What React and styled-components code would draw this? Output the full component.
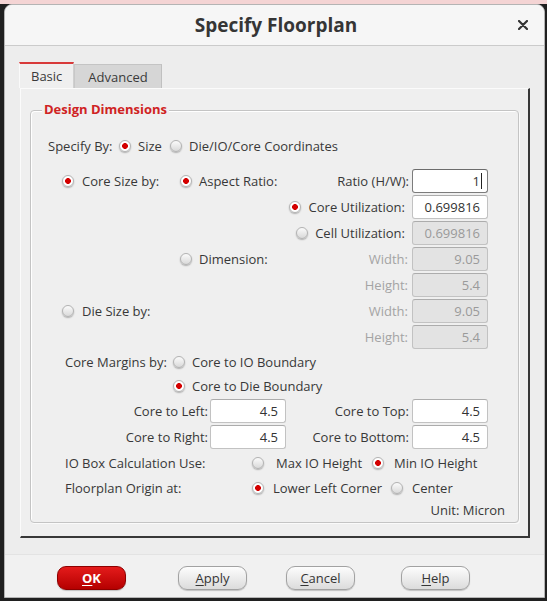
import React from 'react';
import styled, { createGlobalStyle } from 'styled-components';

const Global = createGlobalStyle`
  html, body { margin: 0; padding: 0; }
  body {
    width: 547px;
    height: 601px;
    overflow: hidden;
    background: linear-gradient(#f4d4d4 0 4px, #202020 4px);
    font-family: "Open Sans", "Noto Sans", sans-serif;
    font-size: 13px;
    color: #373737;
  }
`;

const Screen = styled.div`
  box-sizing: border-box;
  height: 601px;
  padding: 4px 2px 0 4px;
`;

const Window = styled.div`
  box-sizing: border-box;
  width: 541px;
  height: 594px;
  border: 1px solid #b4b4b4;
  border-radius: 8px 8px 0 0;
  background: #ededed;
  display: flex;
  flex-direction: column;
  overflow: hidden;
`;

const TitleBar = styled.div`
  height: 40px;
  flex: none;
  display: grid;
  grid-template-columns: 1fr auto 1fr;
  align-items: center;
  background: #f6f6f6;
  border-bottom: 1px solid #cbcbcb;
`;

const Title = styled.div`
  grid-column: 2;
  font-size: 19px;
  font-weight: 700;
  color: #353535;
  padding-left: 3px;
`;

const Close = styled.div`
  grid-column: 3;
  justify-self: end;
  padding-right: 16px;
  display: flex;
  align-items: center;
`;

const Body = styled.div`
  padding: 16px 14px 16px 15px;
  flex: none;
`;

const Tabs = styled.div`
  display: flex;
  align-items: flex-end;
  height: 26px;
  margin-left: -1px;
`;

const Tab = styled.div`
  box-sizing: border-box;
  height: ${p => (p.$active ? 26 : 24)}px;
  padding: 0 ${p => (p.$active ? 11 : 13)}px;
  display: flex;
  align-items: center;
  background: ${p => (p.$active ? '#efefef' : '#d6d6d6')};
  border-top: ${p => (p.$active ? '2px solid #d83a3a' : '1px solid #c4c4c4')};
  border-left: 1px solid ${p => (p.$active ? '#fafafa' : '#c8c8c8')};
  border-right: 1px solid ${p => (p.$active ? '#d0d0d0' : '#c0c0c0')};
  color: #3a3a3a;
  font-size: 13px;
`;

const Panel = styled.div`
  background: #efefef;
  border-top: 1px solid #fbfbfb;
  border-left: 1px solid #fbfbfb;
  border-right: 2px solid #383838;
  border-bottom: 2px solid #383838;
  padding: 21px 9px 13px 9px;
`;

const Group = styled.div`
  position: relative;
  border: 1px solid #c4c4c4;
  border-radius: 4px;
  box-shadow: inset 1px 1px 0 #ffffff, 1px 1px 0 #fafafa;
  padding: 22px 30px 2px 17px;
`;

const GroupTitle = styled.div`
  position: absolute;
  top: -10px;
  left: 11px;
  padding: 0 2px;
  background: #efefef;
  color: #cf2323;
  font-weight: 700;
  font-size: 13px;
  line-height: 17px;
`;

const Row = styled.div`
  display: flex;
  align-items: center;
  height: ${p => p.$h || 26}px;
  padding-left: ${p => p.$indent || 0}px;
  margin-top: ${p => p.$mt || 0}px;
  margin-right: ${p => p.$mr || 0}px;
  justify-content: ${p => (p.$end ? 'flex-end' : 'flex-start')};
  white-space: nowrap;
`;

const Cell = styled.div`
  display: flex;
  align-items: center;
  gap: ${p => (p.$gap == null ? 7 : p.$gap)}px;
  width: ${p => (p.$w ? `${p.$w}px` : 'auto')};
  flex: none;
  justify-content: ${p => (p.$end ? 'flex-end' : 'flex-start')};
`;

const Field = styled.div`
  margin-left: auto;
  display: flex;
  align-items: center;
  gap: ${p => p.$gap || 4}px;
`;

const Label = styled.span`
  color: ${p => (p.$muted ? '#a4a4a4' : '#383838')};
  font-size: 13px;
  line-height: 18px;
`;

const Entry = styled.div`
  box-sizing: border-box;
  width: 76px;
  height: 24px;
  border: 1px solid ${p => (p.$focus ? '#7c7c7c' : '#c2c2c2')};
  border-top-color: ${p => (p.$focus ? '#6c6c6c' : '#acacac')};
  border-radius: 3px;
  background: ${p => (p.$disabled ? '#e3e3e3' : '#ffffff')};
  color: ${p => (p.$disabled ? '#9a9a9a' : '#333333')};
  display: flex;
  align-items: center;
  justify-content: flex-end;
  padding-right: ${p => (p.$focus ? 5 : 7)}px;
  font-size: 13px;
`;

const Caret = styled.span`
  display: inline-block;
  width: 1px;
  height: 16px;
  margin-left: 1px;
  background: #222;
`;

const RadioDot = styled.span`
  box-sizing: border-box;
  width: 12px;
  height: 12px;
  flex: none;
  border-radius: 50%;
  border: 1px solid #b2b2b2;
  background: ${p =>
    p.$on
      ? 'radial-gradient(circle, #d40000 0 2.6px, #ffffff 3.2px)'
      : 'linear-gradient(#fbfbfb, #d9d9d9)'};
  box-shadow: 0 1px 1.5px rgba(0, 0, 0, 0.28);
`;

const Radio = ({ on, children, gap, w }) => (
  <Cell $gap={gap} $w={w}>
    <RadioDot $on={on} />
    {children && <Label>{children}</Label>}
  </Cell>
);

const ButtonBar = styled.div`
  flex: 1;
  background: #f1f1f1;
  border-top: 1px solid #e3e3e3;
  display: flex;
  align-items: flex-start;
  padding: 11px 0 0 52px;
`;

const Button = styled.div`
  box-sizing: border-box;
  width: 69px;
  height: 24px;
  margin-left: ${p => p.$ml || 0}px;
  border-radius: 9px;
  display: flex;
  align-items: center;
  justify-content: center;
  font-size: 13px;
  border: 1px solid ${p => (p.$primary ? '#8e0000' : '#a2a2a2')};
  background: ${p =>
    p.$primary
      ? 'linear-gradient(#e41b1b, #b50000)'
      : 'linear-gradient(#fdfdfd, #dcdcdc)'};
  color: ${p => (p.$primary ? '#ffffff' : '#353535')};
  font-weight: ${p => (p.$primary ? 700 : 400)};
  box-shadow: 0 1px 1px rgba(0, 0, 0, 0.2);
`;

const Key = styled.span`
  text-decoration: underline;
  text-underline-offset: 2px;
`;

export default function App() {
  return (
    <Screen>
      <Global />
      <Window>
        <TitleBar>
          <Title>Specify Floorplan</Title>
          <Close>
            <svg width="10" height="10" viewBox="0 0 10 10">
              <path d="M1 1L9 9M9 1L1 9" stroke="#333" strokeWidth="2.2" strokeLinecap="round" />
            </svg>
          </Close>
        </TitleBar>
        <Body>
          <Tabs>
            <Tab $active>Basic</Tab>
            <Tab>Advanced</Tab>
          </Tabs>
          <Panel>
            <Group>
              <GroupTitle>Design Dimensions</GroupTitle>

              <Row>
                <Cell $w={71}><Label>Specify By:</Label></Cell>
                <Radio on w={51}>Size</Radio>
                <Radio>Die/IO/Core Coordinates</Radio>
              </Row>

              <Row $mt={9} $indent={14}>
                <Radio on w={118} gap={8}>Core Size by:</Radio>
                <Radio on>Aspect Ratio:</Radio>
                <Field $gap={3}>
                  <Label>Ratio (H/W):</Label>
                  <Entry $focus>1<Caret /></Entry>
                </Field>
              </Row>

              <Row>
                <Field $gap={7}>
                  <Radio on gap={8}>Core Utilization:</Radio>
                  <Entry>0.699816</Entry>
                </Field>
              </Row>

              <Row>
                <Field $gap={7}>
                  <Radio gap={7}>Cell Utilization:</Radio>
                  <Entry $disabled>0.699816</Entry>
                </Field>
              </Row>

              <Row $indent={132}>
                <Radio>Dimension:</Radio>
                <Field>
                  <Label $muted>Width:</Label>
                  <Entry $disabled>9.05</Entry>
                </Field>
              </Row>

              <Row>
                <Field>
                  <Label $muted>Height:</Label>
                  <Entry $disabled>5.4</Entry>
                </Field>
              </Row>

              <Row $indent={14}>
                <Radio gap={8}>Die Size by:</Radio>
                <Field>
                  <Label $muted>Width:</Label>
                  <Entry $disabled>9.05</Entry>
                </Field>
              </Row>

              <Row>
                <Field>
                  <Label $muted>Height:</Label>
                  <Entry $disabled>5.4</Entry>
                </Field>
              </Row>

              <Row $h={24} $indent={17}>
                <Cell $w={108}><Label>Core Margins by:</Label></Cell>
                <Radio>Core to IO Boundary</Radio>
              </Row>

              <Row $h={24} $indent={125}>
                <Radio on>Core to Die Boundary</Radio>
              </Row>

              <Row>
                <Cell $w={238} $end $gap={2}>
                  <Label>Core to Left:</Label>
                  <Entry>4.5</Entry>
                </Cell>
                <Field $gap={3}>
                  <Label>Core to Top:</Label>
                  <Entry>4.5</Entry>
                </Field>
              </Row>

              <Row>
                <Cell $w={238} $end $gap={2}>
                  <Label>Core to Right:</Label>
                  <Entry>4.5</Entry>
                </Cell>
                <Field $gap={3}>
                  <Label>Core to Bottom:</Label>
                  <Entry>4.5</Entry>
                </Field>
              </Row>

              <Row $indent={17}>
                <Cell $w={187}><Label>IO Box Calculation Use:</Label></Cell>
                <Radio w={120} gap={12}>Max IO Height</Radio>
                <Radio on gap={10}>Min IO Height</Radio>
              </Row>

              <Row $h={24} $indent={17}>
                <Cell $w={187}><Label>Floorplan Origin at:</Label></Cell>
                <Radio on w={139} gap={9}>Lower Left Corner</Radio>
                <Radio gap={9}>Center</Radio>
              </Row>

              <Row $h={20} $end $mr={-17}>
                <Label>Unit: Micron</Label>
              </Row>
            </Group>
          </Panel>
        </Body>
        <ButtonBar>
          <Button $primary><Key>O</Key>K</Button>
          <Button $ml={52}><Key>A</Key>pply</Button>
          <Button $ml={39}><Key>C</Key>ancel</Button>
          <Button $ml={46}><Key>H</Key>elp</Button>
        </ButtonBar>
      </Window>
    </Screen>
  );
}
